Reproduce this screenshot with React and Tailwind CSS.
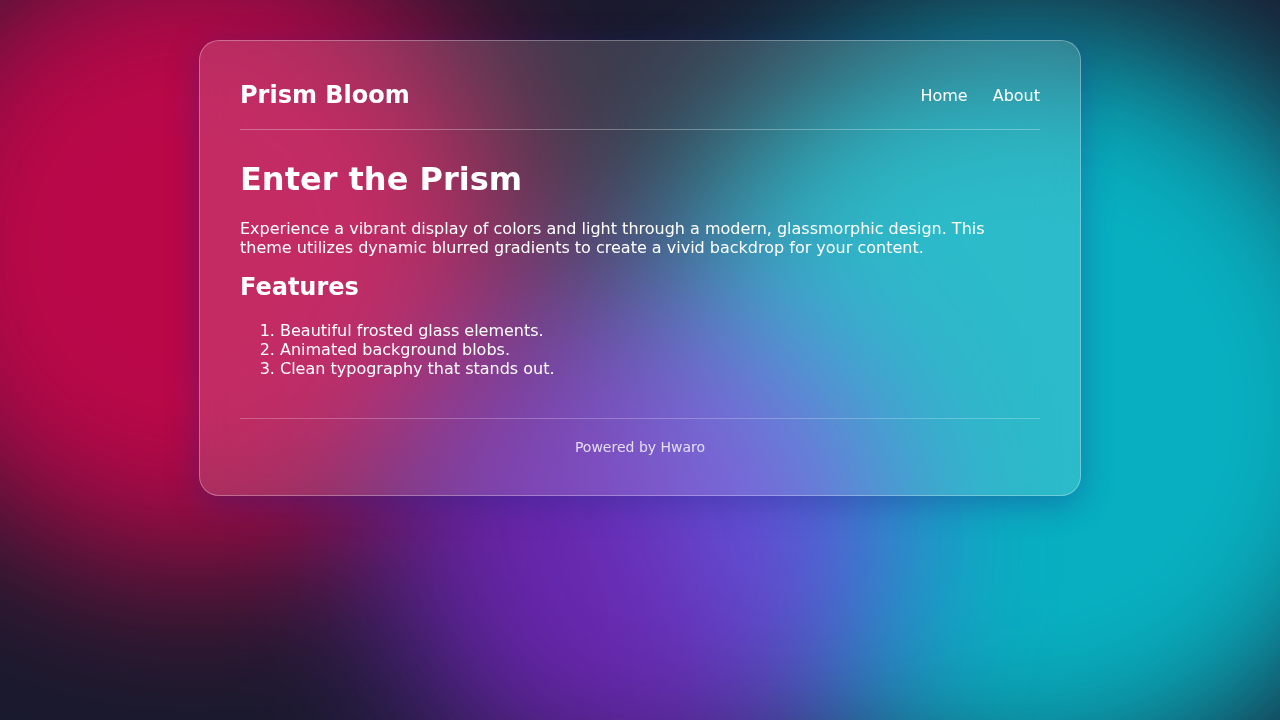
const links = [
  { href: "/", name: "Home" },
  { href: "/about", name: "About" },
];

const features = [
  "Beautiful frosted glass elements.",
  "Animated background blobs.",
  "Clean typography that stands out.",
];

const Blobs = () => (
  <div className="fixed inset-0 -z-10 overflow-hidden" aria-hidden="true">
    <div className="absolute -top-[10%] -left-[10%] size-[50vw] rounded-full bg-[#ff0055] opacity-70 blur-[80px]" />
    <div className="absolute -right-[10%] -bottom-[10%] size-[60vw] rounded-full bg-[#00f0ff] opacity-70 blur-[80px]" />
    <div className="absolute top-[40%] left-[30%] size-[40vw] rounded-full bg-[#8a2be2] opacity-70 blur-[80px]" />
  </div>
);

const Header = () => (
  <header className="flex items-center justify-between border-b border-white/30 pb-5">
    <div className="text-2xl leading-7 font-bold">Prism Bloom</div>
    <nav className="flex gap-[25px]">
      {links.map((link) => (
        <a key={link.href} href={link.href}>
          {link.name}
        </a>
      ))}
    </nav>
  </header>
);

const App = () => {
  return (
    <div className="relative isolate min-h-screen bg-[#1a1a2e] py-10 font-['DejaVu_Sans',sans-serif] leading-[19px] text-white">
      <Blobs />
      <div className="mx-auto max-w-[882px] rounded-[20px] border border-white/30 bg-white/15 p-10 shadow-[0_8px_32px_0_rgba(31,38,135,0.37)] backdrop-blur-[20px]">
        <Header />
        <main className="pt-[30px]">
          <h1 className="text-[32px] leading-[38px] font-bold">
            Enter the Prism
          </h1>
          <p className="mt-[21px]">
            Experience a vibrant display of colors and light through a modern,
            glassmorphic design. This theme utilizes dynamic blurred gradients
            to create a vivid backdrop for your content.
          </p>
          <h2 className="mt-4 text-2xl leading-7 font-bold">Features</h2>
          <ol className="mt-5 list-decimal pl-10">
            {features.map((feature) => (
              <li key={feature}>{feature}</li>
            ))}
          </ol>
        </main>
        <footer className="mt-10 border-t border-white/25 pt-5 text-center text-sm leading-4 text-white/80">
          Powered by Hwaro
        </footer>
      </div>
    </div>
  );
};

export default App;
